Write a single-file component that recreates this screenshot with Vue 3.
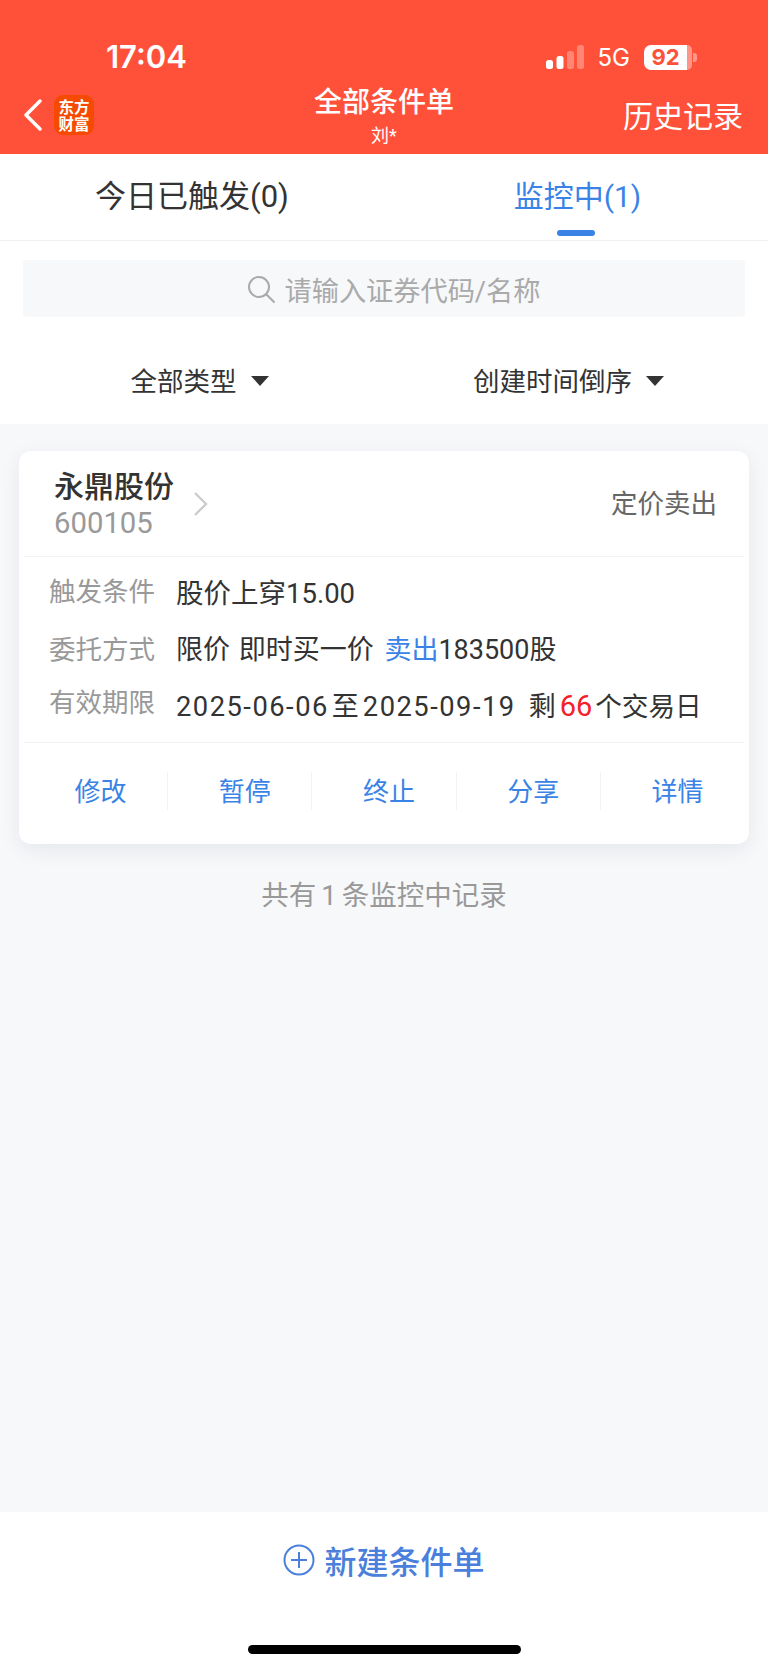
<template>
  <div class="page">
    <header class="top">
      <div class="status">
        <span class="time">17:04</span>
        <div class="status-right">
          <svg class="signal" width="38" height="24" viewBox="0 0 38 24">
            <rect x="0" y="15" width="7" height="9" rx="2.5" fill="#fff" />
            <rect x="10.5" y="11" width="7" height="13" rx="2.5" fill="#fff" />
            <rect x="21" y="6" width="7" height="18" rx="2.5" fill="#fff" fill-opacity="0.3" />
            <rect x="31" y="0" width="7" height="24" rx="2.5" fill="#fff" fill-opacity="0.3" />
          </svg>
          <span class="net">5G</span>
          <div class="battery">
            <div class="battery-body">92</div>
            <div class="battery-rest"></div>
            <div class="battery-cap"></div>
          </div>
        </div>
      </div>
      <div class="nav">
        <div class="nav-left">
          <svg width="20" height="32" viewBox="0 0 20 32">
            <path d="M17 2 L3 16 L17 30" fill="none" stroke="#fff" stroke-width="3.4" stroke-linecap="round" stroke-linejoin="round" />
          </svg>
          <div class="logo">东方<br />财富</div>
        </div>
        <div class="nav-title">
          <div class="title">全部条件单</div>
          <div class="sub">刘*</div>
        </div>
        <div class="nav-right">历史记录</div>
      </div>
    </header>

    <div class="tabs">
      <div
        v-for="tab in tabs"
        :key="tab.label"
        class="tab"
        :class="{ active: tab.active }"
      >
        {{ tab.label }}
      </div>
    </div>

    <div class="search-wrap">
      <div class="search">
        <svg width="30" height="30" viewBox="0 0 30 30">
          <circle cx="13" cy="13" r="10" fill="none" stroke="#aaa" stroke-width="2" />
          <path d="M20.5 20.5 L28 28" stroke="#aaa" stroke-width="2" stroke-linecap="round" />
        </svg>
        <span>请输入证券代码/名称</span>
      </div>
    </div>

    <div class="filters">
      <div class="filter"><span>全部类型</span><i class="caret"></i></div>
      <div class="filter"><span>创建时间倒序</span><i class="caret"></i></div>
    </div>

    <main class="list">
      <section class="card">
        <div class="card-head">
          <div class="stock">
            <div class="stock-name">永鼎股份</div>
            <div class="stock-code">600105</div>
          </div>
          <svg class="chevron" width="16" height="26" viewBox="0 0 16 26">
            <path d="M2 2 L13 13 L2 24" fill="none" stroke="#ccc" stroke-width="2.4" />
          </svg>
          <div class="order-type">定价卖出</div>
        </div>

        <div class="card-body">
          <div class="row">
            <div class="label">触发条件</div>
            <div class="value">股价上穿15.00</div>
          </div>
          <div class="row">
            <div class="label">委托方式</div>
            <div class="value">限价 即时买一价 <em class="blue">卖出</em>183500股</div>
          </div>
          <div class="row">
            <div class="label">有效期限</div>
            <div class="value">
              <span class="date">2025-06-06</span><span class="to">至</span><span class="date">2025-09-19</span><span class="left">剩</span><em class="red">66</em><span class="tail">个交易日</span>
            </div>
          </div>
        </div>

        <div class="actions">
          <div v-for="a in actions" :key="a" class="action">{{ a }}</div>
        </div>
      </section>
      <div class="summary">共有<span class="count">1</span>条监控中记录</div>
    </main>

    <footer class="bottom">
      <div class="create">
        <svg width="32" height="32" viewBox="0 0 32 32">
          <circle cx="16" cy="16" r="14.5" fill="none" stroke="#4a7fdc" stroke-width="2" />
          <path d="M8 16 H24 M16 8 V24" stroke="#4a7fdc" stroke-width="2" />
        </svg>
        <span>新建条件单</span>
      </div>
      <div class="home-bar"></div>
    </footer>
  </div>
</template>

<script setup>
const tabs = [
  { label: "今日已触发(0)", active: false },
  { label: "监控中(1)", active: true },
];
const actions = ["修改", "暂停", "终止", "分享", "详情"];
</script>

<style>
html,
body {
  margin: 0;
  background: #f7f8fa;
}
</style>

<style scoped>
.page {
  width: 768px;
  height: 1669px;
  display: flex;
  flex-direction: column;
  overflow: hidden;
  background: #f7f8fa;
  color: #333;
  font-family: Roboto, "Noto Sans CJK SC", sans-serif;
}
em {
  font-style: normal;
}

.top {
  height: 154px;
  flex: none;
  background: #ff513a;
  color: #fff;
  box-sizing: border-box;
  padding-top: 39px;
}
.status {
  height: 36px;
  display: flex;
  align-items: center;
  justify-content: space-between;
  padding: 0 71px 0 106px;
}
.time {
  font-family: Inter, "Liberation Sans", sans-serif;
  font-size: 31px;
  font-weight: 600;
  line-height: 38px;
}
.status-right {
  display: flex;
  align-items: center;
}
.net {
  font-family: Inter, "Liberation Sans", sans-serif;
  font-size: 24px;
  margin: 0 14px;
}
.battery {
  display: flex;
  align-items: center;
}
.battery-body {
  width: 43px;
  height: 25px;
  background: #fff;
  color: #ff513a;
  border-radius: 7px 0 0 7px;
  font-family: Inter, "Liberation Sans", sans-serif;
  font-size: 22px;
  font-weight: 700;
  line-height: 25px;
  text-align: center;
}
.battery-rest {
  width: 5px;
  height: 25px;
  background: rgba(255, 255, 255, 0.4);
  border-radius: 0 7px 7px 0;
}
.battery-cap {
  width: 4px;
  height: 9px;
  margin-left: 1px;
  background: rgba(255, 255, 255, 0.4);
  border-radius: 0 3px 3px 0;
}

.nav {
  height: 79px;
  position: relative;
  display: flex;
  align-items: center;
  justify-content: space-between;
  padding: 0 25px 0 23px;
}
.nav-left {
  display: flex;
  align-items: center;
  gap: 11px;
}
.logo {
  width: 40px;
  height: 40px;
  border-radius: 9px;
  background: #f54a00;
  text-align: center;
  font-family: "Noto Sans CJK SC", sans-serif;
  font-size: 15.5px;
  font-weight: 700;
  line-height: 17px;
  padding-top: 3px;
  box-sizing: border-box;
}
.nav-title {
  position: absolute;
  left: 0;
  right: 0;
  top: 0;
  text-align: center;
}
.title {
  font-size: 28px;
  font-weight: 500;
  line-height: 40px;
  margin-top: 8px;
}
.sub {
  font-size: 18px;
  line-height: 25px;
}
.nav-right {
  font-size: 30px;
  line-height: 40px;
  margin-top: 4px;
}

.tabs {
  height: 87px;
  flex: none;
  box-sizing: border-box;
  background: #fff;
  border-bottom: 1px solid #f1f1f3;
  display: flex;
}
.tab {
  flex: 1;
  position: relative;
  text-align: center;
  font-size: 31px;
  line-height: 86px;
  color: #333;
}
.tab:first-child {
  flex: none;
  width: 384px;
}
.tab.active {
  color: #3a83e6;
  font-size: 30px;
  padding-left: 3px;
}
.tab.active::after {
  content: "";
  position: absolute;
  left: 50%;
  bottom: 4px;
  width: 38px;
  height: 6px;
  margin-left: -19px;
  border-radius: 3px;
  background: #3a83e6;
}

.search-wrap {
  flex: none;
  background: #fff;
  padding: 19px 23px 0;
}
.search {
  height: 57px;
  background: #f7f8fa;
  border-radius: 3px;
  display: flex;
  align-items: center;
  justify-content: center;
  gap: 9px;
  padding-left: 18px;
  font-size: 27.2px;
  color: #aaa;
}

.filters {
  height: 107px;
  flex: none;
  box-sizing: border-box;
  background: #fff;
  display: flex;
  padding: 17px 15px 0;
}
.filter {
  flex: 1;
  display: flex;
  align-items: center;
  justify-content: center;
  gap: 14px;
  font-size: 26.5px;
  color: #333;
}
.caret {
  width: 0;
  height: 0;
  margin-top: 3px;
  border-left: 9px solid transparent;
  border-right: 9px solid transparent;
  border-top: 10px solid #333;
}

.list {
  flex: 1;
  padding: 27px 19px 0;
}
.card {
  background: #fff;
  border-radius: 12px;
  box-shadow: 0 6px 20px rgba(30, 40, 70, 0.08);
  padding: 0 5px;
  height: 393px;
  box-sizing: border-box;
}
.card-head {
  height: 105px;
  display: flex;
  align-items: center;
  padding: 0 27px 0 30px;
  border-bottom: 1px solid #f3f3f5;
}
.stock-name {
  font-size: 30px;
  font-weight: 500;
  line-height: 38px;
  color: #333;
}
.stock-code {
  font-size: 29.3px;
  line-height: 34px;
  color: #999;
}
.chevron {
  margin-left: 19px;
}
.order-type {
  margin-left: auto;
  margin-bottom: 4px;
  font-size: 26.5px;
  color: #666;
}

.card-body {
  height: 186px;
  box-sizing: border-box;
  padding-top: 6px;
  border-bottom: 1px solid #f3f3f5;
}
.row {
  height: 56.5px;
  display: flex;
  align-items: center;
  padding-left: 25px;
}
.label {
  width: 127px;
  flex: none;
  font-size: 26.5px;
  color: #999;
  margin-bottom: 4px;
}
.row:nth-child(2) .label {
  margin-bottom: 0;
}
.row:nth-child(3) .label {
  margin-bottom: 8px;
}
.value {
  font-size: 27px;
  color: #333;
  white-space: nowrap;
  word-spacing: 2px;
}
.row:first-child .value {
  font-size: 27.5px;
}
.date {
  font-size: 27.3px;
  letter-spacing: 1.5px;
}
.to {
  margin: 0 4px 0 3px;
}
.left {
  margin: 0 4px 0 13px;
}
.tail {
  font-size: 26.6px;
  margin-left: 3px;
}
.blue {
  color: #3a83e6;
  margin-left: 2px;
}
.red {
  color: #f5202a;
  font-size: 29px;
}

.actions {
  height: 96px;
  display: flex;
  align-items: center;
}
.action {
  flex: 1;
  height: 38px;
  box-sizing: border-box;
  padding: 1px 0 0 10px;
  line-height: 38px;
  text-align: center;
  font-size: 26px;
  color: #3a83e6;
  border-left: 1px solid #f3f3f5;
}
.action:first-child {
  border-left: 0;
}

.summary {
  margin-top: 32px;
  text-align: center;
  font-size: 27.5px;
  line-height: 40px;
  color: #999;
}
.count {
  margin: 0 5px;
}

.bottom {
  height: 157px;
  flex: none;
  background: #fff;
  position: relative;
}
.create {
  height: 96px;
  display: flex;
  align-items: center;
  justify-content: center;
  gap: 9px;
  font-size: 32px;
  font-weight: 500;
  color: #4a7fdc;
}
.home-bar {
  position: absolute;
  left: 248px;
  bottom: 15px;
  width: 273px;
  height: 9px;
  border-radius: 5px;
  background: #000;
}
</style>
